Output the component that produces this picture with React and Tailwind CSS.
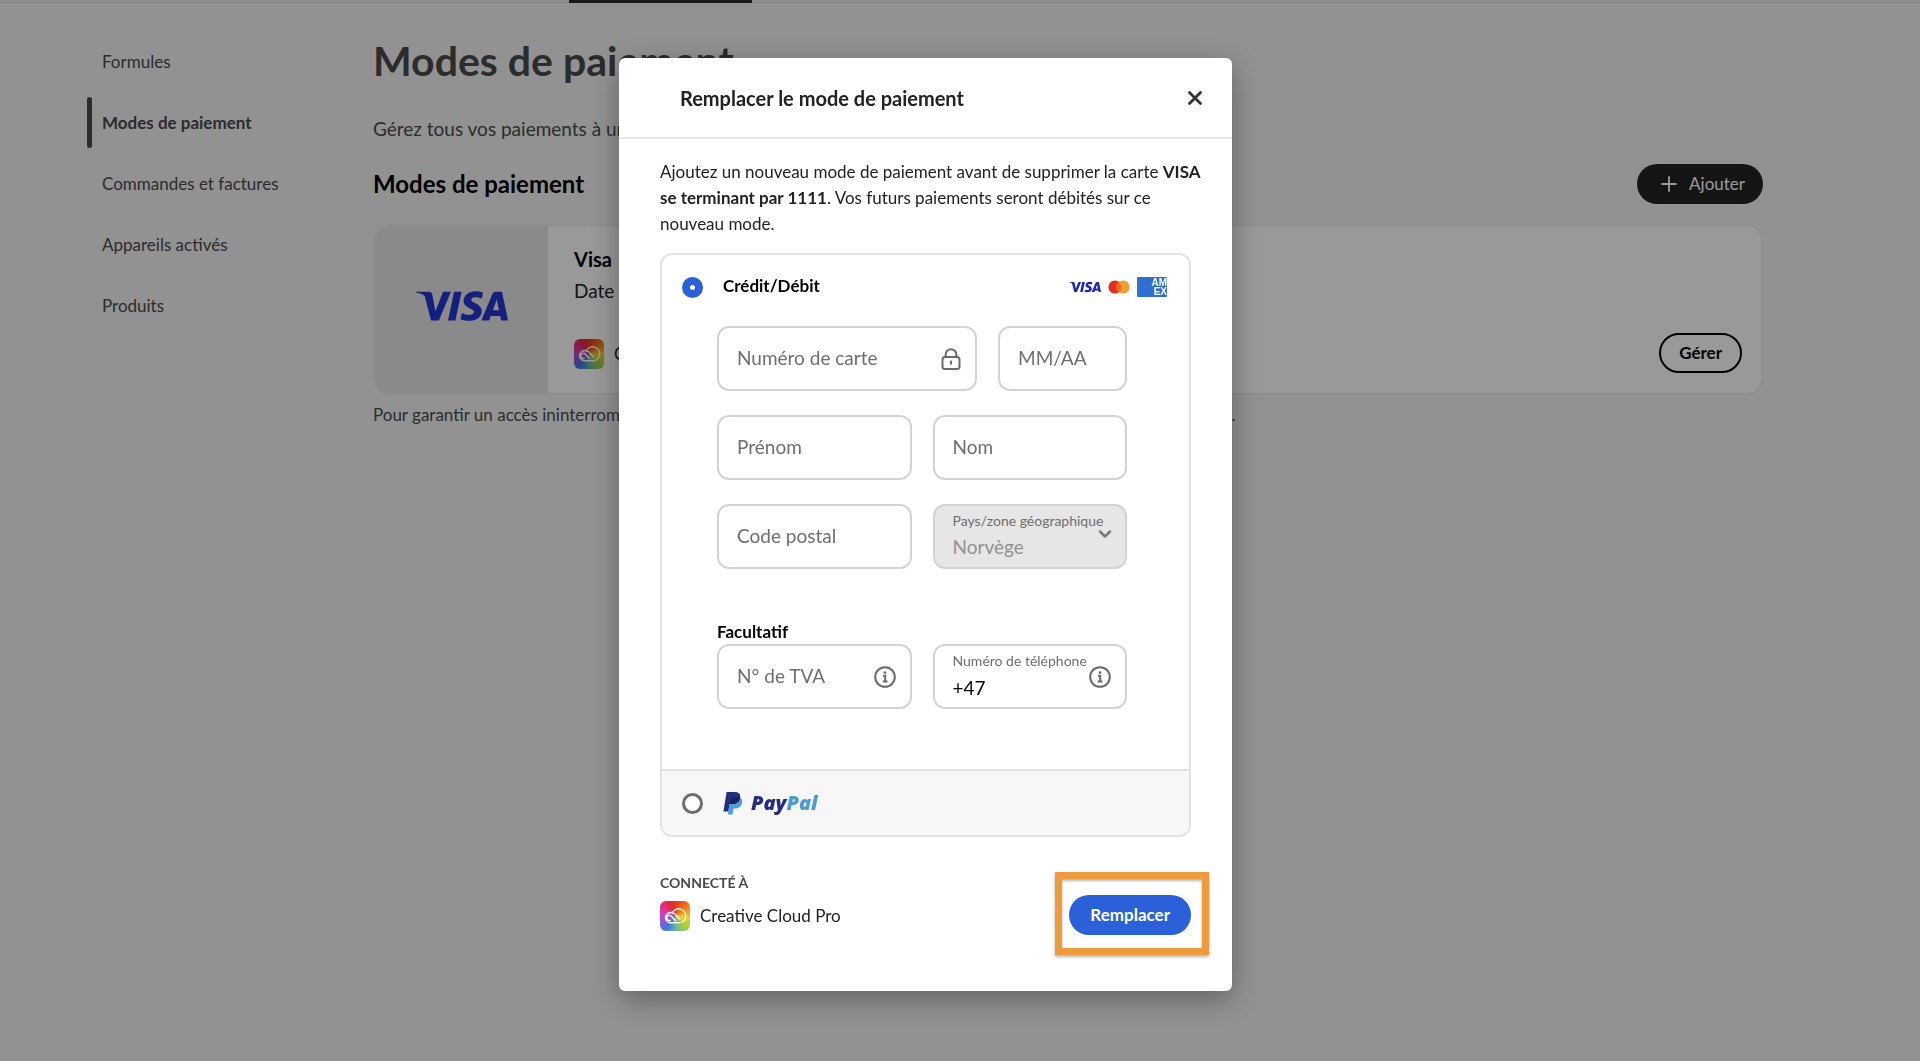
import React from "react";
import { Plus, X, ChevronDown } from "lucide-react";
import { SiVisa } from "react-icons/si";

const NAV_ITEMS = [
    { label: "Formules" },
    { label: "Modes de paiement", active: true },
    { label: "Commandes et factures" },
    { label: "Appareils activés" },
    { label: "Produits" },
];

function CreativeCloudIcon() {
    return (
        <svg viewBox="0 0 30 30" className="h-[30px] w-[30px] shrink-0 rounded-md bg-[conic-gradient(from_0deg_at_50%_50%,#e8341c,#f07a1c_50deg,#f5c92a_95deg,#9fd23a_135deg,#6fb8a0_175deg,#3f78e0_215deg,#a050d8_255deg,#dd38b0_290deg,#e02a4a_330deg,#e8341c)]" aria-hidden="true">
            <g fill="none" stroke="#fff" strokeWidth="1.5" strokeLinecap="round" strokeLinejoin="round">
                <path d="M10.2 21.8h8.6a7 7 0 1 0-6.4-10.1 5.2 5.2 0 1 0-2.2 10.1z" />
                <path d="M15.2 19.4l-3.6-3.8a2.6 2.6 0 1 0-1.4 3.8" />
                <path d="M12.8 12.4c1.4-.2 2.3.5 3.2 1.5l3.8 4" />
            </g>
        </svg>
    );
}

function LockIcon() {
    return (
        <svg viewBox="0 0 20 22" className="h-[22px] w-5" fill="none" stroke="#6b6b6b" strokeWidth="2" aria-hidden="true">
            <rect x="1.5" y="9" width="17" height="12" rx="2.5" />
            <path d="M4.6 9V6.6a5.4 5.4 0 0 1 10.8 0V9" />
            <path d="M10 13.4v2.4" strokeLinecap="round" />
        </svg>
    );
}

function InfoIcon() {
    return (
        <svg viewBox="0 0 22 22" className="h-[22px] w-[22px]" fill="none" stroke="#6b6b6b" strokeWidth="2" aria-hidden="true">
            <circle cx="11" cy="11" r="9.8" />
            <path d="M9 9.8h2.2v5.4M8.7 15.4h4.8" />
            <circle cx="11" cy="6.6" r="1.3" fill="#6b6b6b" stroke="none" />
        </svg>
    );
}

function MastercardLogo() {
    return (
        <svg viewBox="0 0 22 14" className="h-3.5 w-[22px]" role="img" aria-label="Mastercard">
            <circle cx="7" cy="7" r="6.6" fill="#e0301e" />
            <circle cx="15" cy="7" r="6.6" fill="#f0a030" />
            <path d="M11 1.75a6.6 6.6 0 0 1 0 10.5 6.6 6.6 0 0 1 0-10.5z" fill="#ee6a20" />
        </svg>
    );
}

function AmexLogo() {
    return (
        <div className="flex h-5 w-[30px] flex-col items-end justify-center rounded-[1px] bg-[#2f6fd0] font-['Liberation_Sans'] text-[10px] leading-[9px] font-bold text-white">
            <span>AM</span>
            <span>EX</span>
        </div>
    );
}

function PaypalLogo() {
    return (
        <div className="flex items-center gap-2">
            <svg viewBox="0 0 20 24" className="h-6 w-5" aria-hidden="true">
                <path d="M8 6h8.2c2.6 1.2 3.4 3.3 2.8 6-.9 4-3.6 5.5-7.3 5.5h-1.2L9.6 23.4H4.8z" fill="#4a9fdc" />
                <path d="M3.6 1h8.2c4.2 0 6.1 2.2 5.3 6-.9 4.3-3.7 6-7.7 6H6.6L5.3 20.4H.4z" fill="#232f7c" />
                <path d="M8.2 6.6h8.9c-.8 4.4-3.7 6.4-7.7 6.4H7z" fill="#1c2260" />
            </svg>
            <span className="font-['Open_Sans'] text-[20px] leading-6 font-extrabold text-[#262e7e] italic">
                Pay<span className="text-[#4a9bdb]">Pal</span>
            </span>
        </div>
    );
}

function Field({ id, placeholder, className = "", icon }) {
    return (
        <div className={`relative ${className}`}>
            <label htmlFor={id} className="sr-only">{placeholder}</label>
            <input
                id={id}
                type="text"
                placeholder={placeholder}
                className="h-[65px] w-full rounded-xl border-2 border-[#d3d3d3] bg-white px-[18px] pb-0.5 text-[19px] text-black outline-none placeholder:text-[#6e6e6e]"
            />
            {icon && <span className="absolute inset-y-0 right-4 flex items-center">{icon}</span>}
        </div>
    );
}

function Sidebar() {
    return (
        <nav className="w-[286px] shrink-0 pt-7">
            <ul>
                {NAV_ITEMS.map((item) => (
                    <li key={item.label} className="flex h-[61px] items-center gap-2.5">
                        <span className={item.active ? "h-[51px] w-[5px] rounded-full bg-[#4a4a4a]" : "w-[5px]"} />
                        <a href="#" className={item.active ? "text-[17px] font-bold text-[#4a4a4a]" : "text-[17px] text-[#4a4a4a]"}>
                            {item.label}
                        </a>
                    </li>
                ))}
            </ul>
        </nav>
    );
}

function PaymentMethods() {
    return (
        <main className="min-w-0 flex-1">
            <h1 className="pt-8 text-[41px] leading-[52px] font-bold text-[#4a4a4a]">Modes de paiement</h1>
            <p className="mt-7 text-[19px] leading-7 text-[#4a4a4a]">
                Gérez tous vos paiements à un seul endroit.
            </p>
            <div className="mt-[21px] flex h-10 items-center justify-between">
                <h2 className="text-[24px] leading-8 font-bold text-black">Modes de paiement</h2>
                <button type="button" className="flex h-10 items-center gap-2 rounded-full bg-[#242424] pr-[18px] pl-5 text-[17px] text-white">
                    <Plus className="h-6 w-6" strokeWidth={1.8} />
                    Ajouter
                </button>
            </div>
            <section className="mt-5 flex h-[171px] overflow-hidden rounded-2xl border-2 border-[#ededed] bg-white">
                <div className="flex w-[173px] items-center justify-center bg-[#e6e6e6] pb-2">
                    <SiVisa className="h-[92px] w-[92px] text-[#2434d0]" title="Visa" />
                </div>
                <div className="flex flex-1 items-end justify-between pr-[19px] pb-5 pl-[26px]">
                    <div className="pb-1">
                        <h3 className="text-[20px] leading-8 font-bold text-black">Visa</h3>
                        <p className="text-[19px] leading-8 text-[#222]">Date d’expiration : 03/2030</p>
                        <div className="mt-8 flex items-center gap-2.5 text-[17px] text-[#222]">
                            <CreativeCloudIcon />
                            Creative Cloud Pro
                        </div>
                    </div>
                    <button type="button" className="h-10 rounded-full border-2 border-black px-[18px] text-[17px] font-bold text-black">
                        Gérer
                    </button>
                </div>
            </section>
            <p className="mt-2 text-[17px] leading-6 text-[#4a4a4a]">
                Pour garantir un accès ininterrompu à toutes vos applications et services, indiquez un mode de paiement de secours.
            </p>
        </main>
    );
}

function ReplaceDialog() {
    return (
        <div role="dialog" aria-labelledby="dialog-title" className="w-[613px] rounded-md bg-white shadow-[0_8px_30px_rgba(0,0,0,0.35)]">
            <header className="flex h-[81px] items-center justify-between border-b-2 border-[#e6e6e6] pr-[26px] pl-[61px]">
                <h2 id="dialog-title" className="text-[20px] font-bold text-[#222]">Remplacer le mode de paiement</h2>
                <button type="button" aria-label="Fermer" className="text-[#333]">
                    <X className="h-[22px] w-[22px]" strokeWidth={3} />
                </button>
            </header>

            <div className="px-[41px] pt-5 pb-14">
                <p className="-mr-5 text-[17px] leading-[26px] text-[#222]">
                    Ajoutez un nouveau mode de paiement avant de supprimer la carte <b>VISA</b>
                    <br />
                    <b>se terminant par 1111</b>. Vos futurs paiements seront débités sur ce
                    <br />
                    nouveau mode.
                </p>

                <div className="mt-4 overflow-hidden rounded-xl border-2 border-[#e3e3e3]">
                    <div className="flex h-16 items-center justify-between pr-[22px] pl-5">
                        <div className="flex items-center gap-5">
                            <input
                                id="card"
                                type="radio"
                                name="method"
                                defaultChecked
                                className="h-[21px] w-[21px] appearance-none rounded-full border-2 border-[#6e6e6e] bg-white checked:border-8 checked:border-[#2a61d8]"
                            />
                            <label htmlFor="card" className="pb-0.5 text-[17px] font-bold text-black">Crédit/Débit</label>
                        </div>
                        <div className="flex items-center gap-[7px]">
                            <SiVisa className="h-8 w-8 text-[#1f24b8]" title="Visa" />
                            <MastercardLogo />
                            <AmexLogo />
                        </div>
                    </div>

                    <form className="pt-[7px] pr-[62px] pb-[60px] pl-[55px]">
                        <div className="flex flex-col gap-6">
                            <div className="flex gap-[21px]">
                                <Field id="number" placeholder="Numéro de carte" className="w-[260px]" icon={<LockIcon />} />
                                <Field id="expiry" placeholder="MM/AA" className="flex-1" />
                            </div>
                            <div className="grid grid-cols-2 gap-[21px]">
                                <Field id="first-name" placeholder="Prénom" />
                                <Field id="last-name" placeholder="Nom" />
                            </div>
                            <div className="grid grid-cols-2 gap-[21px]">
                                <Field id="zip" placeholder="Code postal" />
                                <div className="relative h-[65px] rounded-xl border-2 border-[#d3d3d3] bg-[#e6e6e6] pt-[5px] pl-[18px]">
                                    <label htmlFor="country" className="block text-[14px] leading-5 whitespace-nowrap text-[#6e6e6e]">
                                        Pays/zone géographique
                                    </label>
                                    <select id="country" disabled className="block h-8 w-[140px] appearance-none bg-transparent text-[19px] leading-8 text-[#929292] opacity-100">
                                        <option>Norvège</option>
                                    </select>
                                    <ChevronDown className="absolute top-[18px] right-2.5 h-5 w-5 text-[#7a7a7a]" strokeWidth={3} />
                                </div>
                            </div>
                        </div>

                        <h3 className="mt-[51px] text-[17px] leading-6 font-bold text-black">Facultatif</h3>
                        <div className="grid grid-cols-2 gap-[21px]">
                            <Field id="vat" placeholder="N° de TVA" icon={<InfoIcon />} />
                            <div className="relative h-[65px] rounded-xl border-2 border-[#d3d3d3] bg-white pt-[5px] pl-[18px]">
                                <label htmlFor="phone" className="block text-[14px] leading-5 whitespace-nowrap text-[#6e6e6e]">
                                    Numéro de téléphone
                                </label>
                                <input id="phone" type="tel" defaultValue="+47" className="block h-8 w-[110px] bg-transparent text-[19px] text-black outline-none" />
                                <span className="absolute inset-y-0 right-3.5 flex items-center">
                                    <InfoIcon />
                                </span>
                            </div>
                        </div>
                    </form>

                    <div className="flex h-[66px] items-center gap-5 border-t-2 border-[#e3e3e3] bg-[#f7f7f7] pl-5">
                        <input
                            id="paypal"
                            type="radio"
                            name="method"
                            className="h-[21px] w-[21px] appearance-none rounded-full border-[3px] border-[#6e6e6e] bg-white"
                        />
                        <label htmlFor="paypal">
                            <PaypalLogo />
                        </label>
                    </div>
                </div>

                <footer className="mt-[34px] flex items-start justify-between">
                    <div>
                        <h3 className="text-[14px] leading-6 font-bold text-[#4a4a4a]">CONNECTÉ À</h3>
                        <div className="mt-1.5 flex items-center gap-2.5 text-[17px] text-[#222]">
                            <CreativeCloudIcon />
                            Creative Cloud Pro
                        </div>
                    </div>
                    <div className="relative mt-6">
                        <button type="button" className="h-10 rounded-full bg-[#2a61d8] px-[21px] text-[17px] font-bold text-white">
                            Remplacer
                        </button>
                        <div className="pointer-events-none absolute -top-[23px] -right-[18px] -bottom-5 -left-3.5 border-[7px] border-[#ed9b3c] shadow-[0_2px_3px_rgba(0,0,0,0.3),inset_0_2px_3px_rgba(0,0,0,0.3)]" />
                    </div>
                </footer>
            </div>
        </div>
    );
}

export default function App() {
    return (
        <div className="min-h-screen bg-[#f4f4f4] font-['Lato',sans-serif]">
            <div className="h-[3px] border-b border-[#dcdcdc]">
                <div className="ml-[569px] h-[3px] w-[183px] bg-[#2c2c2c]" />
            </div>
            <div className="flex pr-[157px] pl-[87px]">
                <Sidebar />
                <PaymentMethods />
            </div>
            <div className="fixed inset-0 flex items-start justify-center overflow-auto bg-black/40 pt-[58px] pr-[69px]">
                <ReplaceDialog />
            </div>
        </div>
    );
}
